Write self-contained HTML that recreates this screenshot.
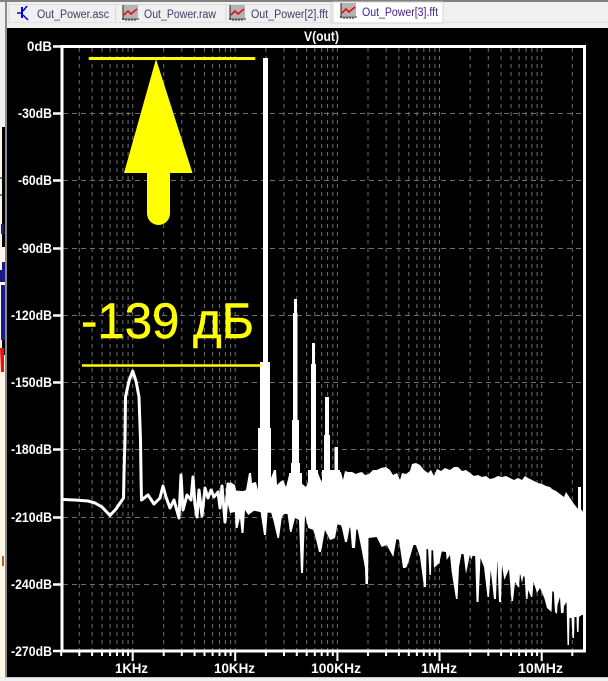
<!DOCTYPE html>
<html><head><meta charset="utf-8">
<style>html,body{margin:0;padding:0;background:#000;width:608px;height:681px;overflow:hidden}svg{display:block}
.t{font:11.5px "Liberation Sans",sans-serif;fill:#3c3c64}
.l{font:bold 13.5px "Liberation Sans",sans-serif;fill:#fff;text-anchor:end}
.x{font:bold 13.5px "Liberation Sans",sans-serif;fill:#fff}
</style></head><body>
<svg width="608" height="681" viewBox="0 0 608 681" xmlns="http://www.w3.org/2000/svg">
<defs>
<g id="dec">
<path d="M-71.500 48V650M-53.400 48V650M-40.600 48V650M-30.700 48V650M-22.600 48V650M-15.700 48V650M-9.800 48V650M-4.600 48V650M0 48V650" stroke="#6e6e6e" stroke-width="1" stroke-dasharray="4 4" fill="none"/>
<path d="M-71.500 651V656M-53.400 651V656M-40.600 651V656M-30.700 651V656M-22.600 651V656M-15.700 651V656M-9.800 651V656M-4.600 651V656M0 651V661" stroke="#fff" stroke-width="2" fill="none"/>
</g>
<g id="ic"><rect x="0" y="0" width="15" height="13" fill="#b4b4b4"/><path d="M0 0V15M-1 14H16M3 14v2M6 14v2M9 14v2M12 14v2" stroke="#222" fill="none"/><path d="M1 10l4-4 3 3 6-5" stroke="#e01010" stroke-width="1.6" fill="none"/></g>
</defs>
<rect width="608" height="681" fill="#000"/>
<!-- left sliver -->
<rect x="0" y="0" width="7" height="681" fill="#f0f0f0"/>
<rect x="0" y="127" width="5" height="550" fill="#fdf8e8"/>
<rect x="2" y="127" width="3" height="120" fill="#000"/>
<path d="M0 178H5M0 195H5" stroke="#000"/>
<path d="M1 224H4V234H1zM2 262H5V282H0V270H2zM1 285H5V340H1z" fill="#1a1a8c"/>
<rect x="2" y="340" width="3" height="15" fill="#000"/>
<path d="M0 348H4V372H1z" fill="#e81010"/>
<rect x="2" y="556" width="2" height="10" fill="#b06020"/>
<rect x="5" y="0" width="2" height="681" fill="#8c8c8c"/>
<!-- tab bar -->
<rect x="7" y="0" width="601" height="28" fill="#f0f0f0"/>
<rect x="0" y="0" width="608" height="2" fill="#808080"/>
<rect x="7" y="22" width="601" height="1" fill="#e0e0e0"/>
<path d="M9 4V22M115.500 4V22M226 4V22M331 4V22" stroke="#d8d8d8" fill="none"/>
<rect x="9" y="4" width="322" height="1" fill="#dcdcdc"/>
<rect x="333" y="2" width="110" height="21" fill="#fff" stroke="#d4d4d4"/>
<path d="M22 7V18" stroke="#0000e0" stroke-width="2" fill="none"/>
<path d="M17 13H22M27 6L23 11M23 15L28 20" stroke="#0000e0" stroke-width="1.500" fill="none"/>
<use href="#ic" x="123" y="5"/>
<use href="#ic" x="230" y="5"/>
<use href="#ic" x="341" y="3"/>
<text class="t" x="37" y="18" textLength="72" lengthAdjust="spacingAndGlyphs">Out_Power.asc</text>
<text class="t" x="144" y="18" textLength="72" lengthAdjust="spacingAndGlyphs">Out_Power.raw</text>
<text class="t" x="251" y="18" textLength="77" lengthAdjust="spacingAndGlyphs">Out_Power[2].fft</text>
<text class="t" x="362" y="16" textLength="76" lengthAdjust="spacingAndGlyphs" style="fill:#40208c">Out_Power[3].fft</text>
<!-- grid -->
<use href="#dec" x="132.700"/><use href="#dec" x="235.200"/><use href="#dec" x="337.400"/><use href="#dec" x="439.500"/><use href="#dec" x="541.700"/>
<path d="M572.300 48V650" stroke="#6e6e6e" stroke-dasharray="4 4" fill="none"/>
<rect x="571.300" y="651" width="2" height="5" fill="#fff"/>
<path d="M63 113.500H584M63 180.500H584M63 248.500H584M63 315.500H584M63 382.500H584M63 449.500H584M63 517.500H584M63 584.500H584" stroke="#6e6e6e" stroke-dasharray="5 4" fill="none"/>
<!-- ticks -->
<path d="M53 46.500H62M53 113.500H62M53 180.500H62M53 248.500H62M53 315.500H62M53 382.500H62M53 449.500H62M53 517.500H62M53 584.500H62M53 651H62" stroke="#fff" stroke-width="2.500" fill="none"/>
<!-- frame -->
<path d="M62 46.500H584.500V651H62Z" fill="none" stroke="#fff" stroke-width="3"/>
<!-- labels -->
<text class="l" x="52" y="51" textLength="25" lengthAdjust="spacingAndGlyphs">0dB</text>
<text class="l" x="52" y="118" textLength="34" lengthAdjust="spacingAndGlyphs">-30dB</text>
<text class="l" x="52" y="185" textLength="34" lengthAdjust="spacingAndGlyphs">-60dB</text>
<text class="l" x="52" y="253" textLength="34" lengthAdjust="spacingAndGlyphs">-90dB</text>
<text class="l" x="52" y="320" textLength="41" lengthAdjust="spacingAndGlyphs">-120dB</text>
<text class="l" x="52" y="387" textLength="41" lengthAdjust="spacingAndGlyphs">-150dB</text>
<text class="l" x="52" y="454" textLength="41" lengthAdjust="spacingAndGlyphs">-180dB</text>
<text class="l" x="52" y="522" textLength="41" lengthAdjust="spacingAndGlyphs">-210dB</text>
<text class="l" x="52" y="589" textLength="41" lengthAdjust="spacingAndGlyphs">-240dB</text>
<text class="l" x="52" y="656" textLength="41" lengthAdjust="spacingAndGlyphs">-270dB</text>
<text class="x" x="115" y="673" textLength="33" lengthAdjust="spacingAndGlyphs">1KHz</text>
<text class="x" x="214" y="673" textLength="41" lengthAdjust="spacingAndGlyphs">10KHz</text>
<text class="x" x="311" y="673" textLength="50" lengthAdjust="spacingAndGlyphs">100KHz</text>
<text class="x" x="421" y="673" textLength="36" lengthAdjust="spacingAndGlyphs">1MHz</text>
<text class="x" x="518" y="673" textLength="45" lengthAdjust="spacingAndGlyphs">10MHz</text>
<text class="x" x="304" y="41" textLength="35" lengthAdjust="spacingAndGlyphs">V(out)</text>
<!-- trace left -->
<path d="M63 499.500L75 500 88 501 95 503 102 507 110 515.500 116 509 123.500 498 124 473 125 440 125.500 397 129 381 132.700 371 136 381 139 397 140.500 440 141 475 141.500 500 148 495 154 504 160 498 163 486 166 497 170 508 174 500 179 518 181 475 183 510 187 495 191 500 193 477 195 505 197 517 199 490 202 516 205 488 208 498 211 490 214 497 218 492 220 508 222 486 225 522 228 484 231 500" fill="none" stroke="#fff" stroke-width="3" stroke-linejoin="round"/>
<!-- body -->
<path fill="#fff" d="M228 486L230 482 235 485 237 495 241 492 246 490 249 473 251 473 252 483 256 482 258 490 259 480 270 480 271 478 274 470 276 470 277 485 280 482 283 480 286 487 289 475 300 475 301 483 306 487 310 477 315 477 318 473 322 483 325 480 329 475 333 480 337 473 341 472 343 480 345 471 348 472 352 472 356 474 358 473 362 472 365 475 369 474 373 470 377 470 381 468 386 467 390 470 393 475 397 473 400 480 402 473 406 474 410 471 412 464 416 463 420 465 424 470 428 473 431 470 434 476 437 469 441 471 445 468 450 470 454 467 458 467 462 471 466 470 470 473 474 476 478 475 482 477 486 476 490 479 494 478 498 476 502 477 506 476 510 478 514 480 518 478 522 480 525 476 528 478 530 479 534 481 538 483 542 484 546 486 550 487 552 489 556 491 560 494 564 497 566 492 570 498 574 504 578 509 582 510 584 514 584 615 581.700 615 579 617 578.500 632 577 632 576.500 617 574.500 617 574 638 572.500 638 571.500 618 569.500 618 569 645 567.500 645 566.500 602 564 606 563.500 613 561 613 560 597 557.500 605 557 614 555 612 553.500 587 552.500 587 551.500 612 547 608 544.300 598 540 588 537 593 533.500 582 532.300 597 531 597 528.300 590 527.500 599 526 599 524.300 572 522 583 520 573 519 587 518 587 515 582 513 601 511.500 601 509 569 504.300 580 502 565 501 602 499 602 497.300 559 496 599 494 599 490.700 570 489 597 487.500 597 484 567 480.500 558 478.500 602 476.500 602 475 550 471 560 470 554 466 574 462.700 547 459 567 457.500 599 456 599 451.700 572 450 555 446.700 560 445.700 549 442.300 549 439.300 563 434 568 433 548 431.500 548 431 575 429.500 575 428 548 426.500 548 426 587 424 587 420 557 416 545 413.500 545 410 557 406.700 567 405 568 403 568 399 540 398.300 528 393.300 557 386.700 545 381.700 547 376.700 537 368.500 538 368 584 365.500 584 365 568 361.700 550 356.700 525 355 548 352 548 350 525 347 542 345 542 341.700 527 338.300 520 335 538 330 540 325 530 321 552 319 552 315.700 538 313.300 530 308.300 528 305 515 303 573 301 573 299 520 295 518 291.500 532 290 532 286.700 508 281.700 518 279 538 277.500 538 273.300 520 268.300 503 266 535 264 535 260 508 255 510 248.300 515 245 510 243.500 533 241.500 533 240 518 237.500 528 235.500 528 235 512 230 513 228 505Z"/>
<!-- fill notches -->
<path fill="#fff" d="M230 490L584 520V612L560 595 530 580 500 562 470 555 430 550 400 540 370 533 340 525 300 515 260 512 230 505Z"/>
<!-- spikes -->
<path fill="#fff" d="M263 58H268V362H270V428H271V490H258V428H260V362H263ZM294 299H297V313H297.500V420H299V463H300V473H302V490H289V473H291V463H292V420H293V313H294ZM312 343H315V364H316V470H318V485H308V470H311V364H312ZM325 397H329V435H330V470H332V485H322V470H324V435H325ZM334.500 447H338V470H340V485H332V470H334.500Z"/>
<rect x="578" y="487" width="3" height="33" fill="#fff"/>
<!-- yellow annotations -->
<path d="M90 58.500H254" stroke="#ff0" stroke-width="3" stroke-linecap="round"/>
<path d="M156 59L192.500 173H170V213.500A11.500 11.500 0 0 1 147 213.500V173H124Z" fill="#ff0"/>
<path d="M82 365.500H262" stroke="#ff0" stroke-width="2.500"/>
<text x="81" y="338" textLength="173" lengthAdjust="spacingAndGlyphs" style="font:50px 'Liberation Sans','Noto Sans CJK SC',sans-serif;fill:#ff0;stroke:#ff0;stroke-width:.5">-139 дБ</text>
<!-- bottom strip -->
<rect x="0" y="677" width="608" height="4" fill="#f0f0f0"/>
<rect x="5" y="677" width="603" height="1" fill="#c8c8c8"/>
</svg>
</body></html>
